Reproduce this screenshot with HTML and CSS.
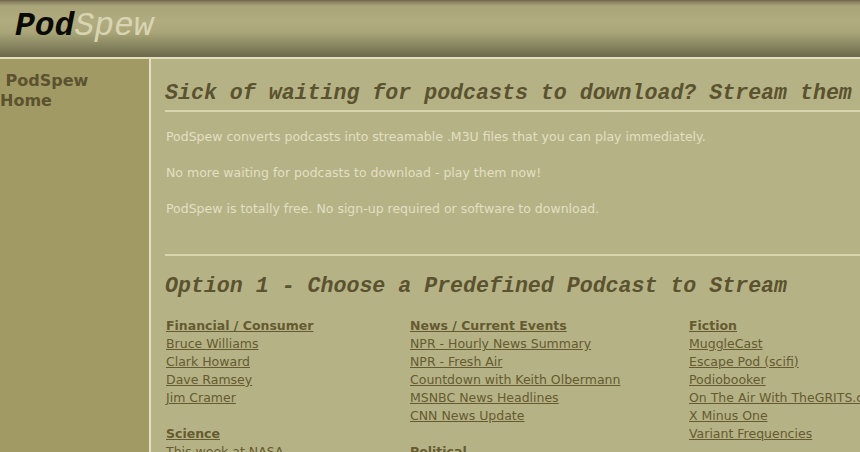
FILE: index.html
```html
<!DOCTYPE html>
<html>
<head>
<meta charset="utf-8">
<title>PodSpew</title>
<link rel="stylesheet" href="styles.css">
</head>
<body>
<div class="header">
  <div class="logo"><span class="pod">Pod</span><span class="spew">Spew</span></div>
</div>
<div class="layout">
  <div class="sidebar">
    <div class="nav">&nbsp;PodSpew Home</div>
  </div>
  <div class="main">
    <h1 class="title">Sick of waiting for podcasts to download? Stream them now!</h1>
    <hr class="rule">
    <p class="intro">PodSpew converts podcasts into streamable .M3U files that you can play immediately.</p>
    <p class="intro">No more waiting for podcasts to download - play them now!</p>
    <p class="intro">PodSpew is totally free. No sign-up required or software to download.</p>
    <hr class="rule rule2">
    <h1 class="title title2">Option 1 - Choose a Predefined Podcast to Stream</h1>
    <div class="cats">
      <div class="col">
        <div class="group">
          <a class="cat" href="#">Financial / Consumer</a>
          <a href="#">Bruce Williams</a>
          <a href="#">Clark Howard</a>
          <a href="#">Dave Ramsey</a>
          <a href="#">Jim Cramer</a>
        </div>
        <div class="group">
          <a class="cat" href="#">Science</a>
          <a href="#">This week at NASA</a>
        </div>
      </div>
      <div class="col">
        <div class="group">
          <a class="cat" href="#">News / Current Events</a>
          <a href="#">NPR - Hourly News Summary</a>
          <a href="#">NPR - Fresh Air</a>
          <a href="#">Countdown with Keith Olbermann</a>
          <a href="#">MSNBC News Headlines</a>
          <a href="#">CNN News Update</a>
        </div>
        <div class="group">
          <a class="cat" href="#">Political</a>
        </div>
      </div>
      <div class="col">
        <div class="group">
          <a class="cat" href="#">Fiction</a>
          <a href="#">MuggleCast</a>
          <a href="#">Escape Pod (scifi)</a>
          <a href="#">Podiobooker</a>
          <a href="#">On The Air With TheGRITS.com</a>
          <a href="#">X Minus One</a>
          <a href="#">Variant Frequencies</a>
        </div>
      </div>
    </div>
  </div>
</div>
</body>
</html>
```

FILE: styles.css
```css
html, body {
  margin: 0;
  padding: 0;
  overflow: hidden;
}
body {
  background: #b5b386;
  font-family: "DejaVu Sans", Verdana, sans-serif;
  width: 860px;
  height: 452px;
}
.header {
  height: 57px;
  border-bottom: 2px solid #e2ddbd;
  background: linear-gradient(to bottom, #6c6148 0px, #8a8262 2px, #a9a578 6px, #b0ac80 22px, #aaa67a 32px, #8c8a63 44px, #6e6b4e 56px);
  display: flex;
  align-items: flex-start;
}
.logo {
  padding: 11px 0 0 15px;
  font-family: "Liberation Mono", "Courier New", monospace;
  font-size: 33px;
  font-style: italic;
  line-height: 32px;
}
.pod {
  font-weight: bold;
  color: #0c0a04;
}
.spew {
  color: #d9d5b2;
}
.layout {
  display: flex;
  height: 400px;
}
.sidebar {
  width: 149px;
  flex: none;
  background: #a29a64;
  border-right: 2px solid #e3dfc0;
  padding-top: 12px;
}
.nav {
  font-weight: bold;
  font-size: 16px;
  line-height: 20px;
  color: #5b522f;
  width: 100px;
}
.main {
  flex: 1;
  padding-left: 14px;
  min-width: 0;
}
.title {
  margin: 21px 0 0 0;
  font-family: "Liberation Mono", "Courier New", monospace;
  font-style: italic;
  font-weight: bold;
  font-size: 21.6px;
  line-height: 26px;
  color: #5b522f;
  white-space: nowrap;
}
.rule {
  border: none;
  height: 2px;
  background: #d8d4ae;
  margin: 4px 0 0 0;
}
.intro {
  margin: 0;
  padding-left: 1px;
  margin-top: 17px;
  font-size: 12.5px;
  line-height: 15px;
  color: #e2dfc2;
}
.intro + .intro {
  margin-top: 21px;
}
.rule2 {
  margin-top: 38px;
}
.title2 {
  margin-top: 17px;
}
.cats {
  display: grid;
  grid-template-columns: 244px 279px auto;
  margin-top: 18px;
  padding-left: 1px;
}
.group {
  display: flex;
  flex-direction: column;
  align-items: flex-start;
  margin-bottom: 18px;
}
.group a {
  font-size: 12.5px;
  line-height: 18px;
  color: #655a30;
  text-decoration: underline;
  white-space: nowrap;
}
.group a.cat {
  font-weight: bold;
}
```
